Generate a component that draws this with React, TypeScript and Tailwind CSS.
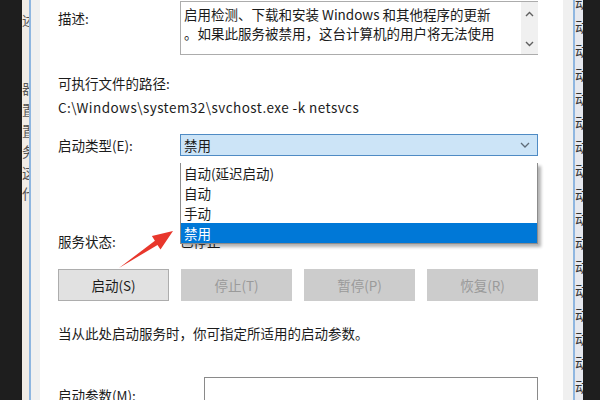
import React from "react";

const rightChars = Array.from({ length: 18 }, () => "动");
const leftChars = ["器", "置", "置", "务", "这", "代"];

function Chevron({ className }: { className?: string }) {
  return (
    <svg width="10" height="6" viewBox="0 0 10 6" className={className}>
      <path d="M1 1 L5 5 L9 1" fill="none" stroke="#5f6b78" strokeWidth="1.3" />
    </svg>
  );
}

function ScrollArrow({ up }: { up?: boolean }) {
  return (
    <svg width="9" height="6" viewBox="0 0 9 6">
      <path
        d={up ? "M1 5 L4.5 1.5 L8 5" : "M1 1 L4.5 4.5 L8 1"}
        fill="none"
        stroke="#606060"
        strokeWidth="1.4"
      />
    </svg>
  );
}

export default function App() {
  const buttons = [
    { label: "启动(S)", enabled: true },
    { label: "停止(T)", enabled: false },
    { label: "暂停(P)", enabled: false },
    { label: "恢复(R)", enabled: false },
  ];

  return (
    <div className="relative flex w-[600px] h-[400px] overflow-hidden bg-white text-[13.5px] text-[#1b1b1b] font-['Noto_Sans_CJK_SC','Microsoft_YaHei',sans-serif]">
      {/* left edge: desktop + window behind */}
      <div className="w-[22px] shrink-0 bg-[#1e1e1e]" />
      <div className="w-[7px] shrink-0 bg-[#f1ece6] overflow-hidden text-[#555] relative">
        <div className="absolute left-0 top-[10px] leading-[20px]">述</div>
        <div className="absolute left-0 top-[78px] flex flex-col leading-[21px]">
          {leftChars.map((c, i) => (
            <span key={i}>{c}</span>
          ))}
        </div>
      </div>
      <div className="w-[2px] shrink-0 bg-[#8fb6e0]" />
      <div className="w-[9px] shrink-0 bg-[#f0f0f0]" />

      {/* dialog body */}
      <div className="relative flex-1 flex flex-col pl-[18px] pr-[25px]">
        {/* description */}
        <div className="flex h-[55px]">
          <div className="w-[122px] pt-[8px] leading-[20px]">描述:</div>
          <div className="mt-[1px] flex flex-1 h-[54px] border border-[#acacac] border-r-0">
            <div className="flex-1 pl-[3px] pt-[3px] leading-[19px] whitespace-nowrap overflow-hidden">
              <div>启用检测、下载和安装 Windows 和其他程序的更新</div>
              <div>。如果此服务被禁用，这台计算机的用户将无法使用</div>
            </div>
            <div className="w-[17px] bg-[#f0f0f0] flex flex-col items-center justify-between pt-[9px] pb-[7px]">
              <ScrollArrow up />
              <ScrollArrow />
            </div>
          </div>
        </div>

        {/* executable path */}
        <div className="mt-[18px] leading-[20px]">可执行文件的路径:</div>
        <div className="mt-[4px] leading-[20px] tracking-[0.45px]">C:\Windows\system32\svchost.exe -k netsvcs</div>

        {/* startup type */}
        <div className="mt-[17px] flex h-[29px] items-center">
          <div className="w-[122px]">启动类型(E):</div>
          <div className="flex-1 h-full flex items-center justify-between bg-[#cce4f7] border border-[#4f8bc4] pl-[3px] pr-[7px]">
            <span>禁用</span>
            <Chevron />
          </div>
        </div>

        <div className="mt-[59px] h-px bg-[#c4c4c4]" />

        {/* service status */}
        <div className="mt-[16px] flex leading-[20px]">
          <div className="w-[122px]">服务状态:</div>
          <div>已停止</div>
        </div>

        {/* buttons */}
        <div className="mt-[18px] flex justify-between">
          {buttons.map((b) =>
            b.enabled ? (
              <div
                key={b.label}
                className="w-[111px] h-[32px] flex items-center justify-center bg-[#e1e1e1] border border-[#adadad]"
              >
                {b.label}
              </div>
            ) : (
              <div
                key={b.label}
                className="w-[111px] h-[32px] flex items-center justify-center bg-[#cccccc] text-[#9a9a9a]"
              >
                {b.label}
              </div>
            )
          )}
        </div>

        <div className="mt-[22px] leading-[20px]">当从此处启动服务时，你可指定所适用的启动参数。</div>

        {/* start parameters */}
        <div className="mt-[34px] flex">
          <div className="w-[146px] pt-[8px] leading-[20px]">启动参数(M):</div>
          <div className="flex-1 h-[26px] border border-[#8a8a8a]" />
        </div>

        {/* open drop-down list */}
        <div className="absolute left-[140px] top-[163px] w-[358px] flex flex-col bg-white border border-t-0 border-[#8c8c8c] shadow-[3px_3px_3px_rgba(0,0,0,0.3)] leading-[20px]">
          <div className="h-[20px] pl-[3px]">自动(延迟启动)</div>
          <div className="h-[20px] pl-[3px]">自动</div>
          <div className="h-[20px] pl-[3px]">手动</div>
          <div className="h-[20px] pl-[3px] bg-[#0078d7] text-white">禁用</div>
        </div>
      </div>

      {/* right edge: window behind + desktop */}
      <div className="w-[10px] shrink-0 bg-[#f0f0f0]" />
      <div className="w-[2px] shrink-0 bg-[#8fb6e0]" />
      <div className="w-[8px] shrink-0 bg-[#e6e8ee] overflow-hidden text-[#333] relative">
        <div className="absolute left-0 top-[-10px] flex flex-col leading-[24px]">
          {rightChars.map((c, i) => (
            <span key={i}>{c}</span>
          ))}
        </div>
      </div>
      <div className="w-[17px] shrink-0 bg-[#1e1e1e]" />

      {/* red annotation arrow */}
      <svg className="absolute left-0 top-0 pointer-events-none" width="600" height="400" viewBox="0 0 600 400">
        <polygon
          points="119,268 154.9,240.7 151.9,236.1 173,231 160.5,249.5 157.5,244.9"
          fill="#e8372c"
        />
      </svg>
    </div>
  );
}
